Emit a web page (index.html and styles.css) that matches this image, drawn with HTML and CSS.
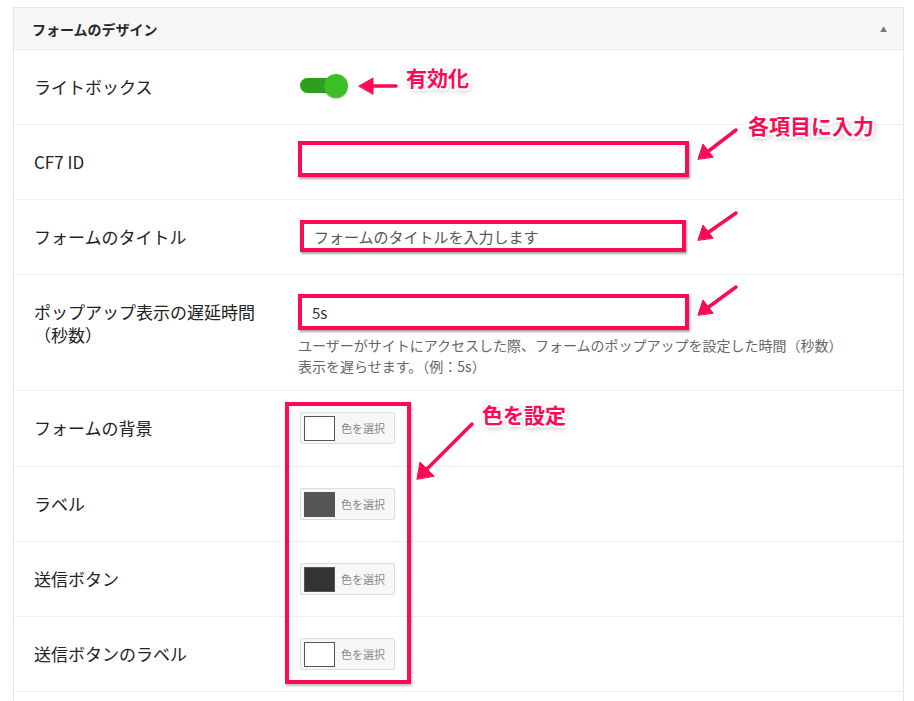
FILE: index.html
```html
<!DOCTYPE html>
<html lang="ja">
<head>
    <meta charset="UTF-8">
    <meta name="viewport" content="width=device-width, initial-scale=1.0">
    <title>フォームのデザイン</title>
    <link rel="stylesheet" href="styles.css">
</head>
<body>
    <div class="page">
        <div class="panel">
            <div class="panel-head">
                <h2>フォームのデザイン</h2>
                <span class="toggle-arrow">▲</span>
            </div>

            <div class="row">
                <div class="label">ライトボックス</div>
                <div class="field field-switch">
                    <span class="switch"><span class="track"></span><span class="knob"></span></span>
                </div>
            </div>

            <div class="row">
                <div class="label">CF7 ID</div>
                <div class="field field-input">
                    <div class="input"></div>
                </div>
            </div>

            <div class="row">
                <div class="label">フォームのタイトル</div>
                <div class="field field-input field-title">
                    <div class="input input-short"><span class="placeholder">フォームのタイトルを入力します</span></div>
                </div>
            </div>

            <div class="row row-tall">
                <div class="label">ポップアップ表示の遅延時間<br>（秒数）</div>
                <div class="field field-delay">
                    <div class="input"><span class="value">5s</span></div>
                    <p class="desc">ユーザーがサイトにアクセスした際、フォームのポップアップを設定した時間（秒数）<br>表示を遅らせます。（例：5s）</p>
                </div>
            </div>

            <div class="row row-color-first">
                <div class="label">フォームの背景</div>
                <div class="field field-color">
                    <button class="color-btn"><span class="swatch swatch-white"></span>色を選択</button>
                </div>
            </div>

            <div class="row">
                <div class="label">ラベル</div>
                <div class="field field-color">
                    <button class="color-btn"><span class="swatch swatch-gray"></span>色を選択</button>
                </div>
            </div>

            <div class="row">
                <div class="label">送信ボタン</div>
                <div class="field field-color">
                    <button class="color-btn"><span class="swatch swatch-dark"></span>色を選択</button>
                </div>
            </div>

            <div class="row">
                <div class="label">送信ボタンのラベル</div>
                <div class="field field-color">
                    <button class="color-btn"><span class="swatch swatch-white"></span>色を選択</button>
                </div>
            </div>

            <div class="row"></div>
        </div>

        <!-- annotations -->
        <div class="mark-box"></div>
        <svg class="arrows" width="914" height="701" viewBox="0 0 914 701">
            <g stroke="#fe0a53" stroke-width="3.5" stroke-linecap="round" fill="#fe0a53">
                <line x1="396" y1="86" x2="368" y2="86"/>
                <polygon points="359,86 373,78 373,94" stroke-width="1"/>

                <line x1="736" y1="130" x2="706" y2="153"/>
                <polygon points="698,159 703,144 713,157" stroke-width="1"/>

                <line x1="736" y1="213" x2="706" y2="234"/>
                <polygon points="698,240 703,225 713,238" stroke-width="1"/>

                <line x1="736" y1="287" x2="706" y2="309"/>
                <polygon points="698,315 703,300 713,313" stroke-width="1"/>

                <line x1="472" y1="424" x2="425" y2="471"/>
                <polygon points="417,479 420,462 434,476" stroke-width="1"/>
            </g>
        </svg>
        <span class="note note-enable">有効化</span>
        <span class="note note-input">各項目に入力</span>
        <span class="note note-color">色を設定</span>
    </div>
</body>
</html>
```

FILE: styles.css
```css
* {
    margin: 0;
    padding: 0;
    box-sizing: border-box;
}

body {
    font-family: "Noto Sans CJK JP", "Noto Sans", sans-serif;
    color: #222;
    background: #fff;
    width: 914px;
    height: 701px;
    overflow: hidden;
}

.page {
    position: relative;
    padding: 7px 10px 0 13px;
}

.panel {
    border: 1px solid #e5e5e5;
    border-bottom: none;
    background: #fff;
}

.panel-head {
    height: 42px;
    background: #f7f7f7;
    border-bottom: 1px solid #eaeaea;
    display: flex;
    align-items: center;
    justify-content: space-between;
    padding: 0 16px 0 18px;
}

.panel-head h2 {
    font-size: 14px;
    font-weight: 700;
    color: #23282d;
}

.toggle-arrow {
    font-size: 7px;
    color: #777;
}

.row {
    height: 75px;
    display: grid;
    grid-template-columns: 264px 1fr;
    padding-left: 20px;
    border-bottom: 1px solid #f0f0f0;
}

.row-tall {
    height: 116px;
}

.row-color-first {
    height: 76px;
}

.label {
    padding-top: 25px;
    font-size: 17px;
    line-height: 23px;
    color: #222;
}

/* switch */
.field-switch {
    padding-top: 24px;
}

.switch {
    position: relative;
    display: block;
    width: 50px;
    height: 24px;
}

.switch .track {
    position: absolute;
    left: 2px;
    top: 4px;
    width: 36px;
    height: 15px;
    border-radius: 8px;
    background: #2f9e1f;
}

.switch .knob {
    position: absolute;
    left: 26px;
    top: 0;
    width: 24px;
    height: 24px;
    border-radius: 50%;
    background: #3cbf25;
    box-shadow: 0 1px 2px rgba(0,0,0,0.2);
}

/* text inputs (outlined in red) */
.field-input {
    padding-top: 16px;
}

.field-title {
    padding-top: 20px;
}

.field-delay {
    padding-top: 19px;
}

.input {
    width: 391px;
    height: 36px;
    border: 4px solid #fe0a53;
    background: #fff;
    box-shadow: 1px 2px 2px rgba(0,0,0,0.35);
    display: flex;
    align-items: center;
    padding-left: 10px;
    font-size: 15px;
}

.input-short {
    width: 386px;
    height: 32px;
    margin-left: 2px;
}

.placeholder {
    color: #555;
}

.value {
    color: #333;
}

.desc {
    margin-top: 5px;
    font-size: 14px;
    line-height: 21px;
    color: #666;
}

/* colour pickers */
.field-color {
    padding-top: 21px;
}

.color-btn {
    display: flex;
    align-items: center;
    width: 95px;
    height: 32px;
    margin-left: 2px;
    border: 1px solid #ddd;
    border-radius: 2px;
    background: #f7f7f7;
    font-family: inherit;
    font-size: 11px;
    color: #888;
    padding: 0 0 0 3px;
}

.swatch {
    width: 31px;
    height: 25px;
    border: 1px solid #555;
    margin-right: 6px;
}

.swatch-white { background: #fff; }
.swatch-gray { background: #555; }
.swatch-dark { background: #333; }

/* annotations */
.mark-box {
    position: absolute;
    left: 285px;
    top: 402px;
    width: 126px;
    height: 282px;
    border: 4px solid #fe0a53;
    box-shadow: 1px 2px 2px rgba(0,0,0,0.25);
}

.arrows {
    position: absolute;
    left: 0;
    top: 0;
    pointer-events: none;
}

.note {
    position: absolute;
    font-size: 21px;
    font-weight: 700;
    line-height: 24px;
    color: #fe0a53;
    white-space: nowrap;
    text-shadow:
        2px 0 0 #fff, -2px 0 0 #fff, 0 2px 0 #fff, 0 -2px 0 #fff,
        2px 2px 0 #fff, -2px -2px 0 #fff, 2px -2px 0 #fff, -2px 2px 0 #fff,
        1px 2px 6px rgba(0,0,0,0.45);
}

.note-enable {
    left: 406px;
    top: 65px;
}

.note-input {
    left: 748px;
    top: 113px;
}

.note-color {
    left: 482px;
    top: 402px;
}
```
